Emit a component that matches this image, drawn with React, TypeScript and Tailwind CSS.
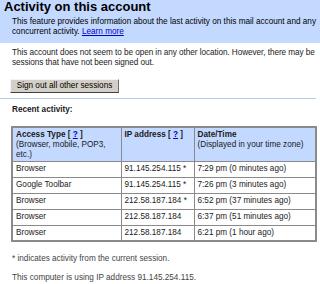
import React from "react";

const rows = [
  ["Browser", "91.145.254.115 *", "7:29 pm (0 minutes ago)"],
  ["Google Toolbar", "91.145.254.115 *", "7:26 pm (3 minutes ago)"],
  ["Browser", "212.58.187.184 *", "6:52 pm (37 minutes ago)"],
  ["Browser", "212.58.187.184", "6:37 pm (51 minutes ago)"],
  ["Browser", "212.58.187.184", "6:21 pm (1 hour ago)"],
];

export default function App() {
  return (
    <div
      className="w-[320px] h-[284px] overflow-hidden bg-white text-[#1a1a1a] text-[8.2px] leading-[10px]"
      style={{ fontFamily: '"Liberation Sans", Arial, sans-serif' }}
    >
      <div className="bg-[#c3d9ff] h-[43px] overflow-hidden">
        <div className="pl-[4px] text-[13px] leading-[13px] font-bold text-black">Activity on this account</div>
        <div className="pl-[12px] mt-[4px] pr-[2px] leading-[10px] text-black">
          This feature provides information about the last activity on this mail account and any concurrent activity.{" "}
          <span className="text-[#0000cc] underline">Learn more</span>
        </div>
      </div>
      <div className="pl-[12px] mt-[5px] pr-0 tracking-[-0.06px]">
        This account does not seem to be open in any other location. However, there may be sessions that have not been signed out.
      </div>
      <div className="ml-[10px] mt-[11px] w-[109px] h-[14px] bg-[#d4d0c8] border border-t-[#f4f4f4] border-l-[#f4f4f4] border-r-[#707070] border-b-[#404040] flex items-center justify-center text-black">
        Sign out all other sessions
      </div>
      <div className="mt-[5px] h-px bg-[#b3c9f0] mr-[4px]" />
      <div className="pl-[12px] mt-[6px] font-bold">Recent activity:</div>
      <table className="ml-[11px] mt-[11px] w-[304px] border-collapse border-2 border-[#8a8a8a] table-fixed">
        <colgroup>
          <col className="w-[109px]" />
          <col className="w-[73px]" />
          <col className="w-[122px]" />
        </colgroup>
        <thead>
          <tr className="bg-[#c3d9ff] h-[34px] align-top">
            <td className="border border-[#8a8a8a] px-[3px] pt-[2px]">
              <span className="font-bold">Access Type [ <span className="text-[#0000cc] underline">?</span> ]</span>
              <br />
              (Browser, mobile, POP3, etc.)
            </td>
            <td className="border border-[#8a8a8a] px-[3px] pt-[2px]">
              <span className="font-bold">IP address [ <span className="text-[#0000cc] underline">?</span> ]</span>
            </td>
            <td className="border border-[#8a8a8a] px-[3px] pt-[2px]">
              <span className="font-bold">Date/Time</span>
              <br />
              (Displayed in your time zone)
            </td>
          </tr>
        </thead>
        <tbody>
          {rows.map((r, i) => (
            <tr key={i} className="h-[16px]">
              {r.map((c, j) => (
                <td key={j} className="border border-[#8a8a8a] px-[3px] py-0 whitespace-nowrap">
                  {c}
                </td>
              ))}
            </tr>
          ))}
        </tbody>
      </table>
      <div className="pl-[12px] mt-[12px] text-[#444]">* indicates activity from the current session.</div>
      <div className="pl-[12px] mt-[9px] text-[#444]">This computer is using IP address 91.145.254.115.</div>
    </div>
  );
}
